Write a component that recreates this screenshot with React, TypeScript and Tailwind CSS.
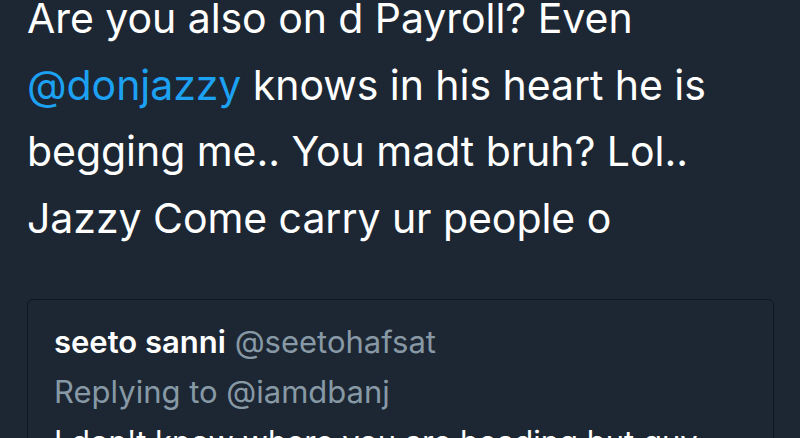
export default function App() {
  return (
    <div className="h-[438px] w-[800px] overflow-hidden bg-[#1c2733] font-['Inter',sans-serif] text-white">
      <div className="-mt-[15px] pl-[27px] pr-4">
        <p className="text-[41px] leading-[66.5px] tracking-[-0.05px]">
          Are you also on d Payroll? Even
          <br />
          <span className="text-[#1da1f2]">@donjazzy</span> knows in his heart he is
          <br />
          begging me.. You madt bruh? Lol..
          <br />
          Jazzy Come carry ur people o
        </p>
        <div className="mt-[48px] w-[747px] rounded-[6px] border border-[#0f161d] px-[26px] pt-[17px]">
          <div className="text-[31px] leading-[50px]">
            <span className="font-semibold">seeto sanni</span>{" "}
            <span className="text-[#8899a6]">@seetohafsat</span>
          </div>
          <div className="text-[31px] leading-[50px] text-[#8899a6]">Replying to @iamdbanj</div>
          <div className="text-[31px] leading-[50px]">I don't know where you are heading but guy</div>
        </div>
      </div>
    </div>
  );
}
